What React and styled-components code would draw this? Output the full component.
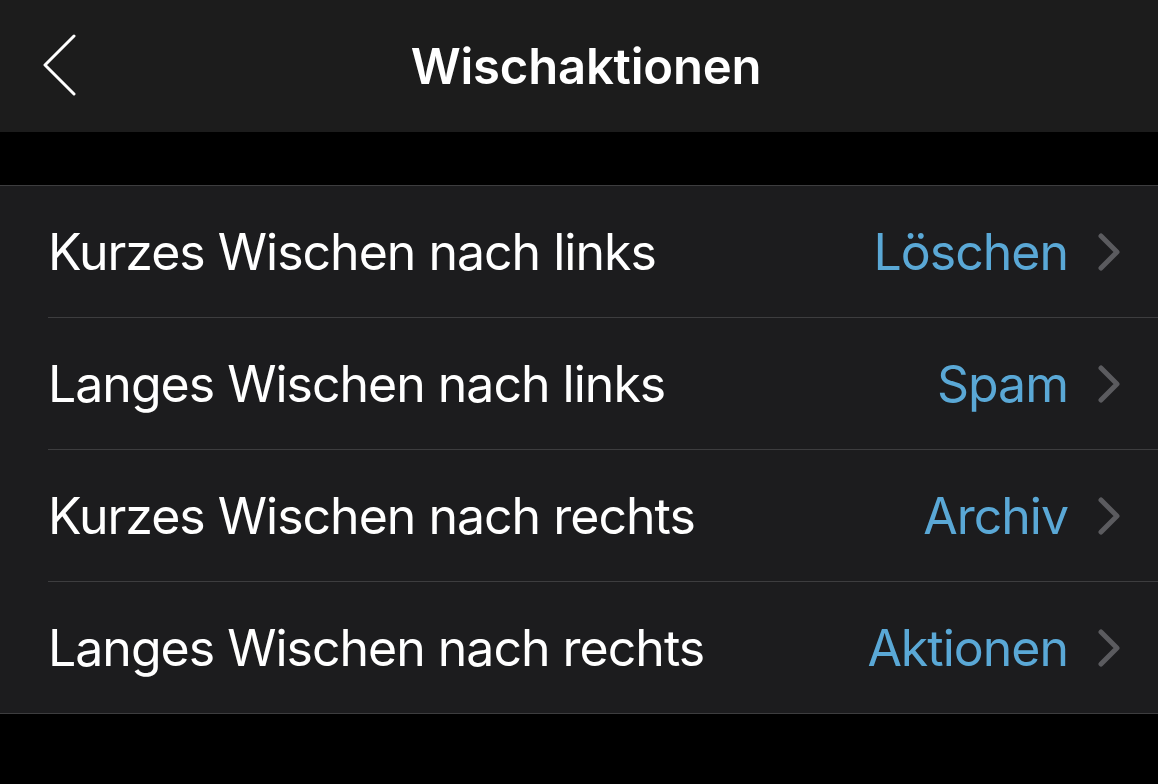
import React from 'react';
import styled, { createGlobalStyle } from 'styled-components';

const Global = createGlobalStyle`
  html, body {
    margin: 0;
    padding: 0;
    background: #000;
  }
  body {
    font-family: Inter, "Noto Sans", sans-serif;
    -webkit-font-smoothing: antialiased;
  }
`;

const Screen = styled.div`
  width: 1158px;
  height: 784px;
  background: #000;
  display: flex;
  flex-direction: column;
  overflow: hidden;
`;

const NavBar = styled.div`
  height: 132px;
  background: #1c1c1c;
  display: grid;
  grid-template-columns: 120px 1fr 120px;
  align-items: center;
`;

const BackButton = styled.button`
  background: none;
  border: none;
  padding: 0 0 0 42px;
  display: flex;
  align-items: center;
  cursor: pointer;
`;

const Title = styled.h1`
  margin: 0;
  text-align: center;
  color: #fff;
  font-size: 49px;
  font-weight: 600;
  letter-spacing: -0.2px;
  padding-left: 14px;
`;

const Gap = styled.div`
  height: 53px;
`;

const Group = styled.div`
  background: #1c1c1e;
  border-top: 1px solid #3d3d3f;
  border-bottom: 1px solid #3d3d3f;
`;

const Row = styled.div`
  height: 131px;
  display: flex;
  align-items: center;
  margin-left: 48px;
  padding-right: 36px;
  border-top: ${p => (p.$first ? 'none' : '1px solid #3d3d3f')};
`;

const Label = styled.span`
  flex: 1;
  color: #fff;
  font-size: 50px;
  font-weight: 400;
  letter-spacing: -1px;
`;

const Value = styled.span`
  color: #5aa8d6;
  font-size: 50px;
  font-weight: 400;
  letter-spacing: -1px;
  margin-right: 30px;
`;

const BackIcon = () => (
  <svg width="36" height="64" viewBox="0 0 36 64">
    <polyline points="32,2 3,31 32,60" fill="none" stroke="#fff" strokeWidth="3" strokeLinecap="round" strokeLinejoin="round" />
  </svg>
);

const Chevron = () => (
  <svg width="24" height="38" viewBox="0 0 24 38">
    <polyline points="3,3 19,19 3,35" fill="none" stroke="#5b5b5f" strokeWidth="5" strokeLinecap="round" strokeLinejoin="round" />
  </svg>
);

const items = [
  { label: 'Kurzes Wischen nach links', value: 'Löschen' },
  { label: 'Langes Wischen nach links', value: 'Spam' },
  { label: 'Kurzes Wischen nach rechts', value: 'Archiv' },
  { label: 'Langes Wischen nach rechts', value: 'Aktionen' },
];

export default function App() {
  return (
    <Screen>
      <Global />
      <NavBar>
        <BackButton>
          <BackIcon />
        </BackButton>
        <Title>Wischaktionen</Title>
        <div />
      </NavBar>
      <Gap />
      <Group>
        {items.map((it, i) => (
          <Row key={it.label} $first={i === 0}>
            <Label>{it.label}</Label>
            <Value>{it.value}</Value>
            <Chevron />
          </Row>
        ))}
      </Group>
    </Screen>
  );
}
